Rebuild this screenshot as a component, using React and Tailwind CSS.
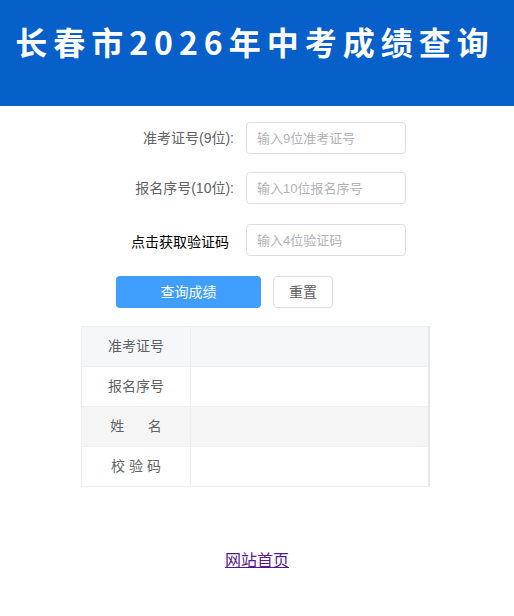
export default function App() {
  const rows = [
    { label: "准考证号", bg: "bg-[#f5f7fa]" },
    { label: "报名序号", bg: "bg-white" },
    { label: "姓\u00a0\u00a0\u00a0\u00a0\u00a0\u00a0名", bg: "bg-[#f5f5f5]" },
    { label: "校 验 码", bg: "bg-white" },
  ];
  const font = { fontFamily: '"Liberation Sans", "Noto Sans CJK SC", sans-serif' };
  return (
    <div className="w-[514px] min-h-[616px] bg-white" style={font}>
      <header className="h-[106px] bg-[#0760c9] flex items-start justify-center pt-[21px]">
        <h1
          className="text-white text-[32px] font-bold leading-[40px] tracking-[6px] pr-[4px]"
          style={{ fontFamily: '"Noto Sans CJK SC", "Liberation Sans", sans-serif' }}
        >
          长春市2026年中考成绩查询
        </h1>
      </header>

      <div className="w-[298px] mx-auto pl-[6px] pt-[16px]">
        <div className="flex items-center h-[32px]">
          <label className="w-[120px] text-right text-[14px] text-[#606266]">准考证号(9位):</label>
          <input
            className="ml-[12px] w-[160px] h-[32px] border border-[#dcdfe6] rounded-[4px] px-[10px] text-[13px] outline-none placeholder:text-[#b0b3b8]"
            placeholder="输入9位准考证号"
          />
        </div>
        <div className="flex items-center h-[32px] mt-[18px]">
          <label className="w-[120px] text-right text-[14px] text-[#606266]">报名序号(10位):</label>
          <input
            className="ml-[12px] w-[160px] h-[32px] border border-[#dcdfe6] rounded-[4px] px-[10px] text-[13px] outline-none placeholder:text-[#b0b3b8]"
            placeholder="输入10位报名序号"
          />
        </div>
        <div className="flex items-center h-[32px] mt-[20px]">
          <label className="w-[120px] text-right text-[14px] text-black pt-[4px] pr-[5px]">点击获取验证码</label>
          <input
            className="ml-[12px] w-[160px] h-[32px] border border-[#dcdfe6] rounded-[4px] px-[10px] text-[13px] outline-none placeholder:text-[#b0b3b8]"
            placeholder="输入4位验证码"
          />
        </div>
        <div className="flex items-center mt-[20px] pl-[2px] gap-[12px]">
          <button className="w-[145px] h-[32px] rounded-[4px] bg-[#409eff] text-white text-[14px]">查询成绩</button>
          <button className="w-[60px] h-[32px] rounded-[4px] border border-[#dcdfe6] bg-white text-[#606266] text-[14px]">重置</button>
        </div>
      </div>

      <table className="w-[349px] ml-[81px] mt-[18px] border-collapse border border-[#ebeef5] border-r-2 border-r-[#e4e7ed] text-[14px] text-[#606266]">
        <tbody>
          {rows.map((r) => (
            <tr key={r.label} className={`${r.bg} h-[40px]`}>
              <td className="w-[109px] text-center border border-[#ebeef5] whitespace-pre">{r.label}</td>
              <td className="border border-[#ebeef5]"></td>
            </tr>
          ))}
        </tbody>
      </table>

      <div className="flex justify-center mt-[64px]">
        <a href="#" className="text-[16px] text-[#551a8b] underline leading-[20px]">网站首页</a>
      </div>
    </div>
  );
}
